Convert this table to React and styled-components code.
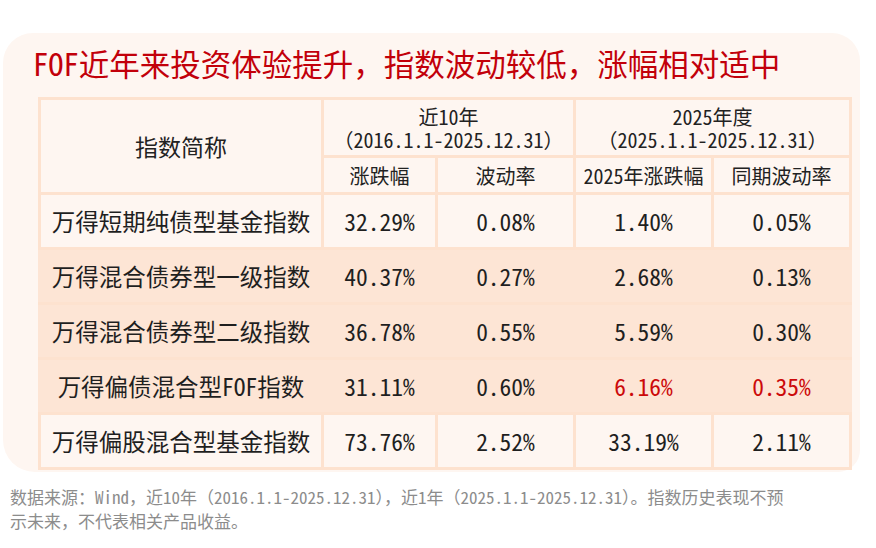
import React from "react";
import styled, { createGlobalStyle } from "styled-components";

const Global = createGlobalStyle`
  html, body { margin: 0; padding: 0; background: #ffffff; }
  body {
    width: 876px;
    height: 548px;
    overflow: hidden;
    font-family: "Noto Sans Mono CJK SC", "Noto Sans CJK SC", sans-serif;
    color: #1f1f1f;
  }
`;

const Page = styled.div`
  padding-top: 33px;
  display: flex;
  flex-direction: column;
`;

const Card = styled.section`
  margin-left: 3px;
  width: 857px;
  box-sizing: border-box;
  background: #fef6f1;
  border-radius: 30px 28px 22px 32px;
  padding: 11px 11px 2px 30px;
  display: flex;
  flex-direction: column;
`;

const Title = styled.h1`
  margin: 0;
  font-size: 30.5px;
  line-height: 38px;
  font-weight: 400;
  color: #c2000a;
  letter-spacing: 0;
`;

const Table = styled.table`
  margin: 15px 0 0 5px;
  width: 811px;
  border-collapse: collapse;
  table-layout: fixed;
  border: 3px solid #fde2cf;
`;

const Col = styled.col`
  width: ${(p) => p.$w}px;
`;

const HeadCell = styled.th`
  border: 3px solid #fde2cf;
  font-weight: 400;
  text-align: center;
  vertical-align: middle;
  padding: 0;
  color: #222;
  font-size: ${(p) => (p.$big ? 23 : 20)}px;
  line-height: 23px;
  height: ${(p) => p.$h || 0}px;
`;

const Row = styled.tr`
  background: ${(p) => (p.$hl ? "#fde5d5" : "#fef6f1")};
`;

const Cell = styled.td`
  border: 3px solid ${(p) => (p.$hl ? "#fde5d5" : "#fde2cf")};
  border-top-color: #fde2cf;
  border-bottom-color: #fde2cf;
  text-align: center;
  vertical-align: middle;
  padding: 0;
  height: 52px;
  font-size: 23.5px;
  color: ${(p) => (p.$red ? "#cc0a0a" : "#1f1f1f")};
  white-space: nowrap;
`;

const Footer = styled.p`
  margin: 13px 0 0 10px;
  font-size: 17px;
  line-height: 24px;
  color: #8c8c8c;
`;

const rows = [
  { name: "万得短期纯债型基金指数", v: ["32.29%", "0.08%", "1.40%", "0.05%"] },
  { name: "万得混合债券型一级指数", v: ["40.37%", "0.27%", "2.68%", "0.13%"], hl: true },
  { name: "万得混合债券型二级指数", v: ["36.78%", "0.55%", "5.59%", "0.30%"], hl: true },
  { name: "万得偏债混合型FOF指数", v: ["31.11%", "0.60%", "6.16%", "0.35%"], hl: true, red: [2, 3] },
  { name: "万得偏股混合型基金指数", v: ["73.76%", "2.52%", "33.19%", "2.11%"] },
];

export default function App() {
  return (
    <>
      <Global />
      <Page>
        <Card>
          <Title>FOF近年来投资体验提升，指数波动较低，涨幅相对适中</Title>
          <Table>
            <colgroup>
              <Col $w={283} />
              <Col $w={114} />
              <Col $w={138} />
              <Col $w={138} />
              <Col $w={138} />
            </colgroup>
            <thead>
              <tr>
                <HeadCell rowSpan={2} $big>指数简称</HeadCell>
                <HeadCell colSpan={2} $h={55}>
                  近10年
                  <br />
                  （2016.1.1-2025.12.31）
                </HeadCell>
                <HeadCell colSpan={2} $h={55}>
                  2025年度
                  <br />
                  （2025.1.1-2025.12.31）
                </HeadCell>
              </tr>
              <tr>
                <HeadCell $h={34}>涨跌幅</HeadCell>
                <HeadCell $h={34}>波动率</HeadCell>
                <HeadCell $h={34}>2025年涨跌幅</HeadCell>
                <HeadCell $h={34}>同期波动率</HeadCell>
              </tr>
            </thead>
            <tbody>
              {rows.map((r) => (
                <Row key={r.name} $hl={r.hl}>
                  <Cell $hl={r.hl}>{r.name}</Cell>
                  {r.v.map((x, i) => (
                    <Cell key={i} $hl={r.hl} $red={r.red && r.red.includes(i)}>
                      {x}
                    </Cell>
                  ))}
                </Row>
              ))}
            </tbody>
          </Table>
        </Card>
        <Footer>
          数据来源：Wind，近10年（2016.1.1-2025.12.31），近1年（2025.1.1-2025.12.31）。指数历史表现不预
          <br />
          示未来，不代表相关产品收益。
        </Footer>
      </Page>
    </>
  );
}
